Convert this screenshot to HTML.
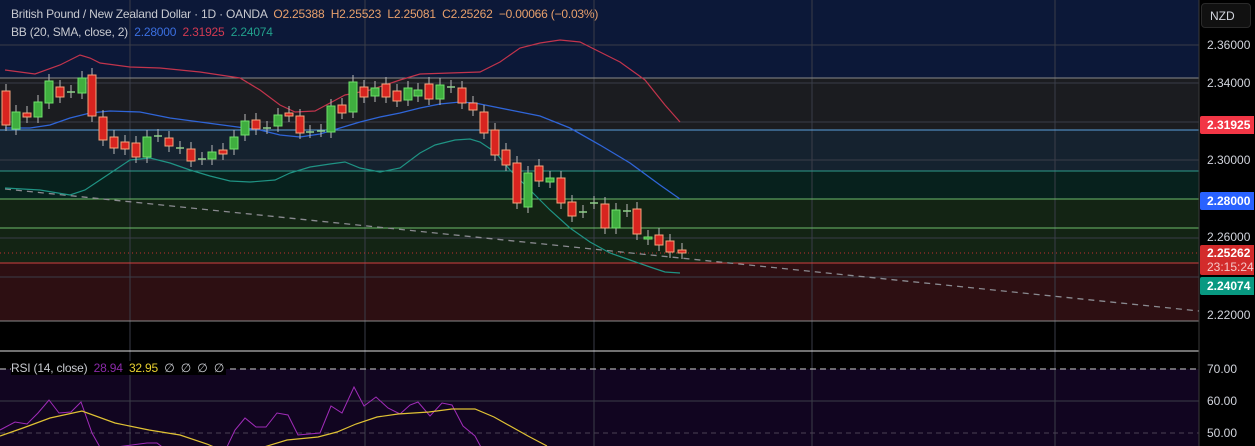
<!DOCTYPE html>
<html><head><meta charset="utf-8"><style>
html,body{margin:0;padding:0;background:#000;width:1255px;height:446px;overflow:hidden;font-family:"Liberation Sans",sans-serif}
#c{position:absolute;left:0;top:0}
.hd{position:absolute;left:11px;font-size:12px;color:#c8cad0;white-space:nowrap;letter-spacing:-0.2px}
.ax{position:absolute;left:1207px;font-size:12px;color:#d1d4dc}
.bx{position:absolute;left:1200px;width:54px;color:#fff;font-size:12px;font-weight:bold;padding-left:7px;box-sizing:border-box;border-radius:2px 0 0 2px}
</style></head><body>
<svg id="c" width="1255" height="446" xmlns="http://www.w3.org/2000/svg">
<rect x="0" y="0" width="1199" height="78" fill="#0c1838"/>
<rect x="0" y="78" width="1199" height="52" fill="#1b1c20"/>
<rect x="0" y="130" width="1199" height="41" fill="#15222f"/>
<rect x="0" y="171" width="1199" height="28" fill="#07211d"/>
<rect x="0" y="199" width="1199" height="64" fill="#132414"/>
<rect x="0" y="263" width="1199" height="58" fill="#2d0f12"/>
<rect x="0" y="321" width="1199" height="30" fill="#000"/>
<rect x="0" y="369" width="1199" height="77" fill="#110520"/>
<g stroke="#3a3d48" stroke-width="1">
<line x1="130" y1="0" x2="130" y2="446"/><line x1="365" y1="0" x2="365" y2="446"/><line x1="594" y1="0" x2="594" y2="446"/><line x1="812" y1="0" x2="812" y2="446"/><line x1="1055" y1="0" x2="1055" y2="446"/>
<line x1="0" y1="45" x2="1199" y2="45"/><line x1="0" y1="83" x2="1199" y2="83"/><line x1="0" y1="122" x2="1199" y2="122"/><line x1="0" y1="160" x2="1199" y2="160"/><line x1="0" y1="238" x2="1199" y2="238"/><line x1="0" y1="277" x2="1199" y2="277"/><line x1="0" y1="401" x2="1199" y2="401"/>
</g>
<line x1="0" y1="433" x2="1199" y2="433" stroke="#4a4155" stroke-dasharray="5,4"/>
<line x1="0" y1="78" x2="1199" y2="78" stroke="#8a8a8a"/>
<line x1="0" y1="130" x2="1199" y2="130" stroke="#5aa0dc"/>
<line x1="0" y1="171" x2="1199" y2="171" stroke="#2e9a8a"/>
<line x1="0" y1="199" x2="1199" y2="199" stroke="#6dbb6a"/>
<line x1="0" y1="228" x2="1199" y2="228" stroke="#6dbb6a"/>
<line x1="0" y1="253" x2="1199" y2="253" stroke="#c03030" stroke-dasharray="1,3"/>
<line x1="0" y1="263" x2="1199" y2="263" stroke="#d04040"/>
<line x1="0" y1="321" x2="1199" y2="321" stroke="#8a8a8a"/>
<line x1="0" y1="351" x2="1199" y2="351" stroke="#e0e0e0"/>
<line x1="0" y1="369" x2="1199" y2="369" stroke="#cfcfcf" stroke-dasharray="6,4"/>
<line x1="1199" y1="0" x2="1199" y2="446" stroke="#3a3a3a"/>
<line x1="5" y1="189" x2="1199" y2="311" stroke="#8a8a90" stroke-width="1.3" stroke-dasharray="6,5"/>
<polyline fill="none" stroke="#c2344c" stroke-width="1.2" points="5,70 35,74 60,65 80,55 90,58 100,63 130,67 160,68 200,72 240,78 260,90 280,105 295,112 315,111 330,103 345,95 370,90 400,80 420,74 450,73 480,72 500,62 520,48 540,43 560,40 580,42 600,52 620,62 645,80 665,105 680,122"/>
<polyline fill="none" stroke="#2f65d8" stroke-width="1.3" points="5,128 30,128 50,125 70,118 90,113 110,111 140,112 170,118 200,122 230,126 260,130 280,135 300,137 320,134 340,128 360,122 380,117 400,113 420,108 440,104 460,102 475,103 490,106 510,110 540,116 570,128 600,145 630,163 660,185 680,199"/>
<polyline fill="none" stroke="#1f9384" stroke-width="1.2" points="5,188 40,190 70,195 85,190 100,180 115,170 130,160 150,158 170,163 190,170 210,176 230,181 250,182 275,180 290,173 310,167 330,164 345,162 360,168 380,172 400,168 420,153 435,145 455,140 470,139 480,142 495,152 510,170 530,190 550,210 570,228 590,242 610,253 630,260 650,267 665,272 680,273"/>
<g id="cd"></g>
<polyline fill="none" stroke="#a02cb8" stroke-width="1" points="0,430 15,422 27,424 38,413 49,400 59,413 71,412 81,402 92,433 101,449 147,443 157,443 165,449 226,449 235,430 245,418 256,427 266,427 277,413 288,415 298,435 320,433 331,406 342,413 354,387 364,406 376,397 388,408 400,414 410,405 418,402 430,416 442,403 452,405 463,426 475,436 482,449"/>
<polyline fill="none" stroke="#e0c234" stroke-width="1.2" points="0,436 23,428 50,418 82,411 115,423 149,430 180,435 207,444 214,447 264,447 287,440 318,437 337,432 356,424 377,417 398,414 429,412 452,409 475,409 494,417 528,436 547,446"/>
</svg>
<div class="hd" style="top:7px">British Pound / New Zealand Dollar · 1D · OANDA &nbsp;<span style="color:#e8a06c">O2.25388 &nbsp;H2.25523 &nbsp;L2.25081 &nbsp;C2.25262 &nbsp;−0.00066 (−0.03%)</span></div>
<div class="hd" style="top:25px">BB (20, SMA, close, 2) &nbsp;<span style="color:#3b6fe0">2.28000</span> &nbsp;<span style="color:#d23a52">2.31925</span> &nbsp;<span style="color:#22a08c">2.24074</span></div>
<div class="hd" style="top:361px;background:#000;padding-right:2px">RSI (14, close) &nbsp;<span style="color:#8a2aa8">28.94</span> &nbsp;<span style="color:#e8d030">32.95</span> &nbsp;∅ &nbsp;∅ &nbsp;∅ &nbsp;∅</div>
<div style="position:absolute;left:1201px;top:3px;width:50px;height:25px;border:1px solid #2a2a2a;border-radius:4px;background:#111;color:#d1d4dc;font-size:12px;line-height:25px;padding-left:8px;box-sizing:border-box">NZD</div>
<div class="ax" style="top:38px">2.36000</div>
<div class="ax" style="top:76px">2.34000</div>
<div class="bx" style="top:116px;height:18px;line-height:18px;background:#f23645">2.31925</div>
<div class="ax" style="top:153px">2.30000</div>
<div class="bx" style="top:192px;height:18px;line-height:18px;background:#2962ff">2.28000</div>
<div class="ax" style="top:230px">2.26000</div>
<div class="bx" style="top:245px;height:30px;line-height:14px;padding-top:1px;background:#d32b2b">2.25262<br><span style="font-weight:normal;color:#f5c8c8">23:15:24</span></div>
<div class="bx" style="top:277px;height:18px;line-height:18px;background:#089981">2.24074</div>
<div class="ax" style="top:308px">2.22000</div>
<div class="ax" style="top:362px">70.00</div>
<div class="ax" style="top:394px">60.00</div>
<div class="ax" style="top:426px">50.00</div>
<script>
var d=[[6,91,125,'r'],[16,112,129,'g'],[27,113,117,'r'],[38,102,117,'g'],[49,81,103,'g'],[60,87,97,'r'],[71,92,92,'d'],[82,78,93,'g'],[92,75,116,'r'],[103,117,140,'r'],[114,137,148,'r'],[125,142,149,'r'],[136,143,157,'r'],[147,137,157,'g'],[158,136,136,'d'],[169,138,146,'r'],[180,148,148,'d'],[191,149,161,'r'],[202,159,159,'d'],[212,152,159,'g'],[223,150,154,'r'],[234,137,149,'g'],[245,121,135,'g'],[256,120,129,'r'],[267,128,128,'d'],[278,115,126,'g'],[289,113,116,'r'],[300,116,133,'r'],[310,132,132,'d'],[321,131,131,'d'],[331,106,132,'g'],[342,105,113,'r'],[353,82,112,'g'],[364,87,97,'r'],[375,88,96,'g'],[386,84,97,'r'],[397,91,101,'r'],[408,88,100,'g'],[418,90,96,'g'],[429,84,99,'r'],[440,85,99,'g'],[451,87,87,'d'],[462,88,103,'r'],[473,103,110,'r'],[484,112,133,'r'],[495,130,155,'r'],[506,150,165,'r'],[517,163,203,'r'],[528,173,207,'g'],[539,166,181,'r'],[550,178,182,'g'],[561,178,203,'r'],[572,202,216,'r'],[583,212,212,'d'],[594,203,203,'d'],[605,204,228,'r'],[616,210,228,'g'],[627,211,211,'d'],[637,209,234,'r'],[648,237,239,'g'],[659,235,245,'r'],[670,241,252,'r'],[682,250,253,'r']];
var s='';d.forEach(function(c){var x=c[0],t=c[1],b=c[2],k=c[3];var wt=t-7,wb=b+6;
s+='<line x1="'+x+'" y1="'+wt+'" x2="'+x+'" y2="'+wb+'" stroke="#b8b8b8" stroke-width="1"/>';
if(k=='d'){s+='<line x1="'+(x-4)+'" y1="'+t+'" x2="'+(x+4)+'" y2="'+t+'" stroke="#8fd08a" stroke-width="1.5"/>';}
else{var f=k=='r'?'#d8241f':'#3fae3f',st=k=='r'?'#f4a57c':'#6fe06a';s+='<rect x="'+(x-4)+'" y="'+t+'" width="8" height="'+Math.max(2,b-t)+'" fill="'+f+'" stroke="'+st+'" stroke-width="1"/>';}});
document.getElementById('cd').innerHTML=s;
</script>
</body></html>
